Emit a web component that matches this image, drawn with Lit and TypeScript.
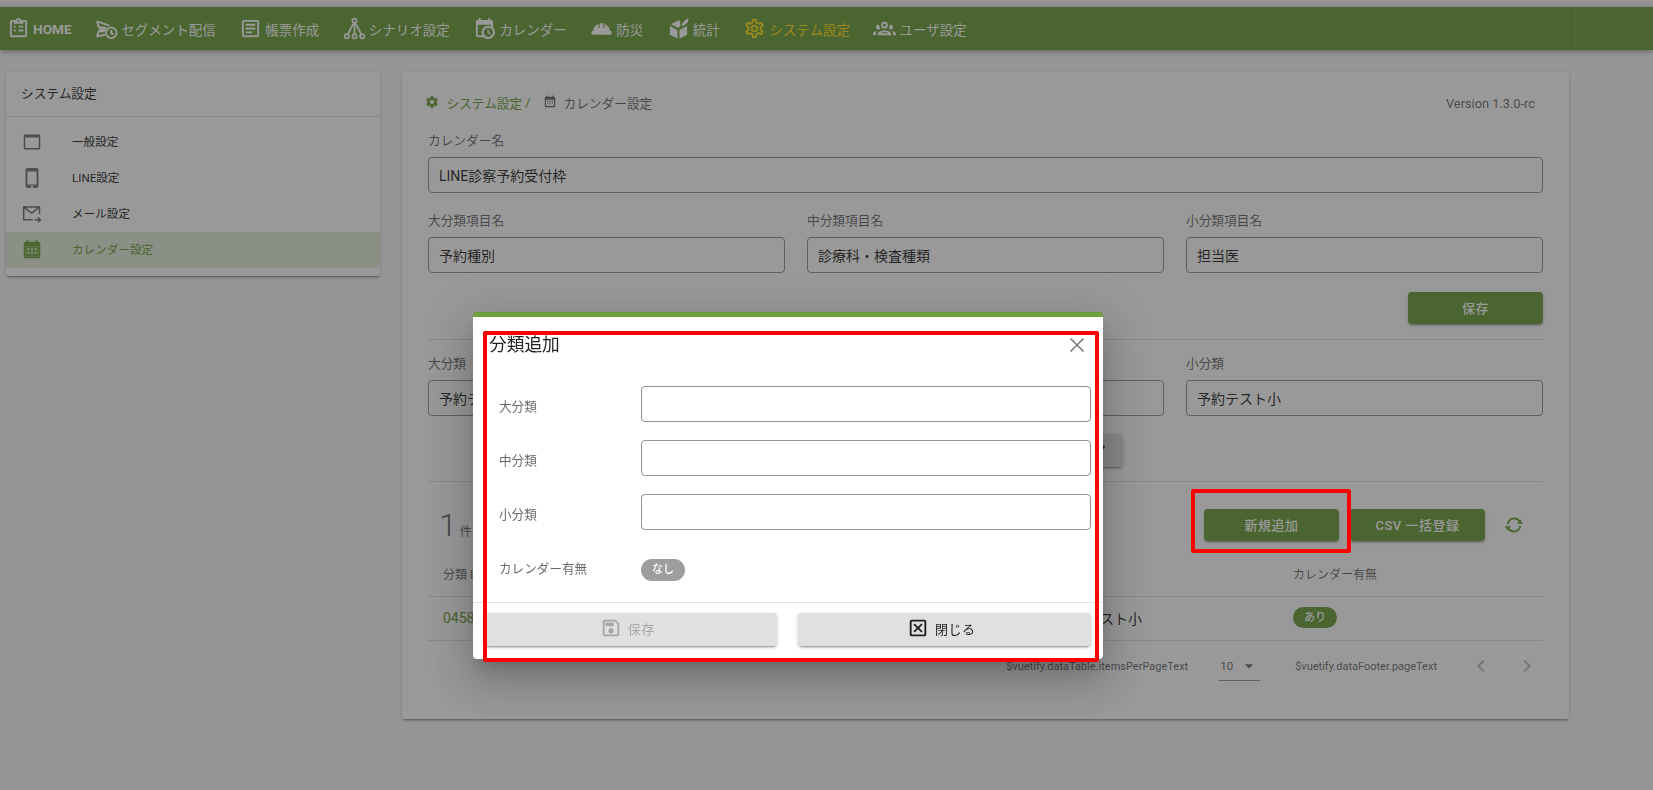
import { LitElement, html, css, svg } from "lit";
import { customElement } from "lit/decorators.js";

const path = (d: string) => svg`<path d=${d}></path>`;

const ICONS: Record<string, unknown> = {
    clipboard: path("M19,3H14.82C14.4,1.84 13.3,1 12,1C10.7,1 9.6,1.84 9.18,3H5A2,2 0 0,0 3,5V19A2,2 0 0,0 5,21H19A2,2 0 0,0 21,19V5A2,2 0 0,0 19,3M12,3A1,1 0 0,1 13,4A1,1 0 0,1 12,5A1,1 0 0,1 11,4A1,1 0 0,1 12,3M7,7H17V5H19V19H5V5H7V7M12,11H17V9H12V11M12,15H17V13H12V15M7,11H9V9H7V11M7,15H9V13H7V15Z"),
    send: svg`<g fill="none" stroke="currentColor" stroke-width="2"><path d="M2 4.5 L15 9 M2 4.5 L3.8 10.5 L12 11.5 M4 13 L11 13.5 M2 20.5 L3.8 15 L10 15 M2 20.5 L10.5 18.5"></path><circle cx="17" cy="16.5" r="5.5"></circle><path d="M17 13.5 V17 L19.5 18"></path></g>`,
    textBox: path("M5,3C3.89,3 3,3.89 3,5V19C3,20.11 3.89,21 5,21H19C20.11,21 21,20.11 21,19V5C21,3.89 20.11,3 19,3H5M5,5H19V19H5V5M7,7V9H17V7H7M7,11V13H17V11H7M7,15V17H14V15H7Z"),
    scenario: svg`<g fill="none" stroke="currentColor" stroke-width="1.8"><circle cx="12" cy="4" r="2.2"></circle><circle cx="4" cy="20" r="2.2"></circle><circle cx="12" cy="20" r="2.2"></circle><circle cx="20" cy="20" r="2.2"></circle><path d="M12 6.2 V17.8 M10.8 7 L5 18 M13.2 7 L19 18"></path></g>`,
    calendarClock: path("M15,13H16.5V15.82L18.94,17.23L18.19,18.53L15,16.69V13M19,8H5V19H9.67C9.24,18.09 9,17.07 9,16A7,7 0 0,1 16,9C17.07,9 18.09,9.24 19,9.67V8M5,21C3.89,21 3,20.1 3,19V5C3,3.89 3.89,3 5,3H6V1H8V3H16V1H18V3H19A2,2 0 0,1 21,5V11.1C22.24,12.36 23,14.09 23,16A7,7 0 0,1 16,23C14.09,23 12.36,22.24 11.1,21H5M16,11.15A4.85,4.85 0 0,0 11.15,16C11.15,18.68 13.32,20.85 16,20.85A4.85,4.85 0 0,0 20.85,16C20.85,13.32 18.68,11.15 16,11.15Z"),
    hardHat: path("M10 6.5h4v5h1.2V7.2C18.6 8.3 20.6 11 20.8 14.5h1.4C22.8 16 22.6 18 21.4 18.5H2.6C1.4 18 1.2 16 1.8 14.5h1.4C3.4 11 5.4 8.3 8.8 7.2v4.3H10z"),
    cube: svg`<path d="M3 9.5 L11 13.5 V22.5 L3 18.5Z M13 13.5 L21 9.5 V18.5 L13 22.5Z M4 7.5 L12 3.5 L14 4.5 C13.6 6 13.6 7.5 14.3 9 L12 11.5Z M15.5 9.5 C15.5 6 18 3 22.5 1.5 C22.5 5.5 20 8.5 15.5 9.5Z"></path>`,
    cogOutline: path("M12,8A4,4 0 0,1 16,12A4,4 0 0,1 12,16A4,4 0 0,1 8,12A4,4 0 0,1 12,8M12,10A2,2 0 0,0 10,12A2,2 0 0,0 12,14A2,2 0 0,0 14,12A2,2 0 0,0 12,10M10,22C9.75,22 9.54,21.82 9.5,21.58L9.13,18.93C8.5,18.68 7.96,18.34 7.44,17.94L4.95,18.95C4.73,19.03 4.46,18.95 4.34,18.73L2.34,15.27C2.21,15.05 2.27,14.78 2.46,14.63L4.57,12.97L4.5,12L4.57,11L2.46,9.37C2.27,9.22 2.21,8.95 2.34,8.73L4.34,5.27C4.46,5.05 4.73,4.96 4.95,5.05L7.44,6.05C7.96,5.66 8.5,5.32 9.13,5.07L9.5,2.42C9.54,2.18 9.75,2 10,2H14C14.25,2 14.46,2.18 14.5,2.42L14.87,5.07C15.5,5.32 16.04,5.66 16.56,6.05L19.05,5.05C19.27,4.96 19.54,5.05 19.66,5.27L21.66,8.73C21.79,8.95 21.73,9.22 21.54,9.37L19.43,11L19.5,12L19.43,13L21.54,14.63C21.73,14.78 21.79,15.05 21.66,15.27L19.66,18.73C19.54,18.95 19.27,19.04 19.05,18.95L16.56,17.95C16.04,18.34 15.5,18.68 14.87,18.93L14.5,21.58C14.46,21.82 14.25,22 14,22H10M11.25,4L10.88,6.61C9.68,6.86 8.62,7.5 7.85,8.39L5.44,7.35L4.69,8.65L6.8,10.2C6.4,11.37 6.4,12.64 6.8,13.8L4.68,15.36L5.43,16.66L7.86,15.62C8.63,16.5 9.68,17.14 10.87,17.38L11.24,20H12.76L13.13,17.39C14.32,17.14 15.37,16.5 16.14,15.62L18.57,16.66L19.32,15.36L17.2,13.81C17.6,12.64 17.6,11.37 17.2,10.2L19.31,8.65L18.56,7.35L16.15,8.39C15.38,7.5 14.32,6.86 13.12,6.62L12.75,4H11.25Z"),
    cog: path("M12,15.5A3.5,3.5 0 0,1 8.5,12A3.5,3.5 0 0,1 12,8.5A3.5,3.5 0 0,1 15.5,12A3.5,3.5 0 0,1 12,15.5M19.43,12.97C19.47,12.65 19.5,12.33 19.5,12C19.5,11.67 19.47,11.34 19.43,11L21.54,9.37C21.73,9.22 21.78,8.95 21.66,8.73L19.66,5.27C19.54,5.05 19.27,4.96 19.05,5.05L16.56,6.05C16.04,5.66 15.5,5.32 14.87,5.07L14.5,2.42C14.46,2.18 14.25,2 14,2H10C9.75,2 9.54,2.18 9.5,2.42L9.13,5.07C8.5,5.32 7.96,5.66 7.44,6.05L4.95,5.05C4.73,4.96 4.46,5.05 4.34,5.27L2.34,8.73C2.21,8.95 2.27,9.22 2.46,9.37L4.57,11C4.53,11.34 4.5,11.67 4.5,12C4.5,12.33 4.53,12.65 4.57,12.97L2.46,14.63C2.27,14.78 2.21,15.05 2.34,15.27L4.34,18.73C4.46,18.95 4.73,19.03 4.95,18.95L7.44,17.94C7.96,18.34 8.5,18.68 9.13,18.93L9.5,21.58C9.54,21.82 9.75,22 10,22H14C14.25,22 14.46,21.82 14.5,21.58L14.87,18.93C15.5,18.67 16.04,18.34 16.56,17.94L19.05,18.95C19.27,19.03 19.54,18.95 19.66,18.73L21.66,15.27C21.78,15.05 21.73,14.78 21.54,14.63L19.43,12.97Z"),
    users: path("M12,5A3.5,3.5 0 0,0 8.5,8.5A3.5,3.5 0 0,0 12,12A3.5,3.5 0 0,0 15.5,8.5A3.5,3.5 0 0,0 12,5M12,7A1.5,1.5 0 0,1 13.5,8.5A1.5,1.5 0 0,1 12,10A1.5,1.5 0 0,1 10.5,8.5A1.5,1.5 0 0,1 12,7M5.5,8A2.5,2.5 0 0,0 3,10.5C3,11.44 3.53,12.25 4.29,12.68C4.65,12.88 5.06,13 5.5,13C5.94,13 6.35,12.88 6.71,12.68C7.08,12.47 7.39,12.17 7.62,11.81C6.89,10.86 6.5,9.7 6.5,8.5C6.5,8.41 6.5,8.31 6.5,8.22C6.2,8.08 5.86,8 5.5,8M18.5,8C18.14,8 17.8,8.08 17.5,8.22C17.5,8.31 17.5,8.41 17.5,8.5C17.5,9.7 17.11,10.86 16.38,11.81C16.5,12 16.63,12.15 16.78,12.3C16.94,12.45 17.1,12.58 17.29,12.68C17.65,12.88 18.06,13 18.5,13C18.94,13 19.35,12.88 19.71,12.68C20.47,12.25 21,11.44 21,10.5A2.5,2.5 0 0,0 18.5,8M12,14C9.66,14 5,15.17 5,17.5V19H19V17.5C19,15.17 14.34,14 12,14M4.71,14.55C2.78,14.78 0,15.76 0,17.5V19H3V17.07C3,16.06 3.69,15.22 4.71,14.55M19.29,14.55C20.31,15.22 21,16.06 21,17.07V19H24V17.5C24,15.76 21.22,14.78 19.29,14.55M12,16C13.53,16 15.24,16.5 16.23,17H7.77C8.76,16.5 10.47,16 12,16Z"),
    window: path("M21 2H3C1.89 2 1 2.89 1 4V20C1 21.11 1.89 22 3 22H21C22.11 22 23 21.11 23 20V4C23 2.89 22.11 2 21 2M21 20H3V6H21V20Z"),
    phone: path("M17,19H7V5H17M12,22.5A1.3,1.3 0 0,1 10.7,21.2A1.3,1.3 0 0,1 12,19.9A1.3,1.3 0 0,1 13.3,21.2A1.3,1.3 0 0,1 12,22.5M17,1H7C5.89,1 5,1.89 5,3V21A2,2 0 0,0 7,23H17A2,2 0 0,0 19,21V3C19,1.89 18.1,1 17,1Z"),
    mailSend: svg`<g fill="none" stroke="currentColor" stroke-width="1.8"><path d="M21 12 V3.5 H2 V19 H13"></path><path d="M2.5 4 L11.5 11 L20.5 4"></path><path d="M15 19 H22 M19.2 16 L22.2 19 L19.2 22"></path></g>`,
    calendar: svg`<path fill-rule="evenodd" d="M19 3H18V1H16V3H8V1H6V3H5C3.89 3 3 3.9 3 5V19C3 20.1 3.89 21 5 21H19C20.1 21 21 20.1 21 19V5C21 3.9 20.1 3 19 3M19 19H5V8H19Z"></path><path d="M5 8H19V19H5Z" fill-opacity="0.88"></path><path fill="#e4efdc" d="M7 10H9V12H7ZM11 10H13V12H11ZM15 10H17V12H15ZM7 14H9V16H7ZM11 14H13V16H11ZM15 14H17V16H15Z"></path>`,
    calendarSmall: svg`<path fill-rule="evenodd" d="M19 3H18V1H16V3H8V1H6V3H5C3.89 3 3 3.9 3 5V19C3 20.1 3.89 21 5 21H19C20.1 21 21 20.1 21 19V5C21 3.9 20.1 3 19 3M19 19H5V8H19ZM7 10H9V12H7ZM11 10H13V12H11ZM15 10H17V12H15ZM7 14H9V16H7ZM11 14H13V16H11ZM15 14H17V16H15Z"></path>`,
    close: svg`<path fill="none" stroke="currentColor" stroke-width="1.5" d="M5.5 5.5 L18.5 18.5 M18.5 5.5 L5.5 18.5"></path>`,
    closeBox: path("M19,3H5A2,2 0 0,0 3,5V19A2,2 0 0,0 5,21H19A2,2 0 0,0 21,19V5A2,2 0 0,0 19,3M19,19H5V5H19V19M17,8.4L13.4,12L17,15.6L15.6,17L12,13.4L8.4,17L7,15.6L10.6,12L7,8.4L8.4,7L12,10.6L15.6,7L17,8.4Z"),
    save: path("M17 3H5C3.89 3 3 3.9 3 5V19C3 20.1 3.89 21 5 21H19C20.1 21 21 20.1 21 19V7L17 3M19 19H5V5H16.17L19 7.83V19M12 12C10.34 12 9 13.34 9 15S10.34 18 12 18 15 16.66 15 15 13.66 12 12 12M6 6H15V10H6V6Z"),
    sync: svg`<g fill="none" stroke="currentColor" stroke-width="2.2"><path d="M4.5 11 A7.8 7.8 0 0 1 18.6 7.5"></path><path d="M19.5 13 A7.8 7.8 0 0 1 5.4 16.5"></path></g><path d="M15.5 10.5 H23 L19.6 5.5Z M8.5 13.5 H1 L4.4 18.5Z"></path>`,
    left: path("M15.41,16.58L10.83,12L15.41,7.41L14,6L8,12L14,18L15.41,16.58Z"),
    right: path("M8.59,16.58L13.17,12L8.59,7.41L10,6L16,12L10,18L8.59,16.58Z"),
    menuDown: path("M7,10L12,15L17,10H7Z"),
};

const icon = (name: string, cls = "") =>
    html`<svg class="icon ${cls}" viewBox="0 0 24 24" fill="currentColor" aria-hidden="true">${ICONS[name]}</svg>`;

const NAV_ITEMS = [
    { label: "HOME", icon: "clipboard", cls: "strong" },
    { label: "セグメント配信", icon: "send", cls: "" },
    { label: "帳票作成", icon: "textBox", cls: "" },
    { label: "シナリオ設定", icon: "scenario", cls: "" },
    { label: "カレンダー", icon: "calendarClock", cls: "" },
    { label: "防災", icon: "hardHat", cls: "" },
    { label: "統計", icon: "cube", cls: "" },
    { label: "システム設定", icon: "cogOutline", cls: "current" },
    { label: "ユーザ設定", icon: "users", cls: "" },
];

const SIDE_ITEMS = [
    { label: "一般設定", icon: "window", cls: "s18", active: false },
    { label: "LINE設定", icon: "phone", cls: "s22", active: false },
    { label: "メール設定", icon: "mailSend", cls: "s20", active: false },
    { label: "カレンダー設定", icon: "calendar", cls: "s22", active: true },
];

@customElement("app-root")
export class AppRoot extends LitElement
{
    static styles = css`
        :host
        {
            display     : block;
            min-height  : 790px;
            background  : #fafafa;
            color       : rgba(0, 0, 0, 0.87);
            font-family : Roboto, "Noto Sans CJK JP", sans-serif;
        }

        .icon
        {
            display : block;
            flex    : none;
            width   : 24px;
            height  : 24px;
        }

        .s14 { width : 14px; height : 14px; }
        .s18 { width : 18px; height : 18px; }
        .s20 { width : 20px; height : 20px; }
        .s22 { width : 22px; height : 22px; }
        .s23 { width : 23px; height : 23px; }

        .strip
        {
            height     : 7px;
            background : linear-gradient(#fff 1px, #f4f4f4 2px, #e6e6e6);
        }

        .nav
        {
            display      : flex;
            align-items  : center;
            gap          : 23.5px;
            height       : 43px;
            padding-left : 7px;
            background   : #6d9f3b;
            color        : #fff;
            box-shadow   : 0 2px 4px -1px rgba(0, 0, 0, 0.2), 0 4px 5px rgba(0, 0, 0, 0.14);
        }

        .nav-item
        {
            display     : flex;
            align-items : center;
            gap         : 3px;
            font-size   : 13.5px;
            white-space : nowrap;
        }

        .nav-item.strong { font-size : 13.7px; font-weight : 700; }
        .nav-item.current { color : #ffe01e; }

        .nav-end
        {
            flex        : none;
            width       : 77px;
            height      : 100%;
            margin-left : auto;
            border-left : 1px solid rgba(255, 255, 255, 0.1);
        }

        .page
        {
            display     : flex;
            align-items : flex-start;
            gap         : 22px;
            padding     : 22px 0 0 6px;
        }

        .card
        {
            background    : #fff;
            border-radius : 2px;
            box-shadow    : 0 3px 1px -2px rgba(0, 0, 0, 0.2), 0 2px 2px rgba(0, 0, 0, 0.14), 0 1px 5px rgba(0, 0, 0, 0.12);
        }

        .side
        {
            flex           : none;
            width          : 374px;
            padding-bottom : 8px;
        }

        .side-title
        {
            height        : 44px;
            padding-left  : 15px;
            font-size     : 12.7px;
            line-height   : 43px;
            border-bottom : 1px solid rgba(0, 0, 0, 0.12);
            margin-bottom : 7px;
        }

        .side-item
        {
            display      : flex;
            align-items  : center;
            height       : 36px;
            padding-left : 15px;
            font-size    : 11.6px;
        }

        .side-item .slot
        {
            display         : flex;
            justify-content : center;
            width           : 22px;
            margin-right    : 29px;
            color           : rgba(0, 0, 0, 0.54);
        }

        .side-item .text { margin-bottom : 2px; }

        .side-item.active
        {
            background : #e4efdc;
            color      : #6d9f3b;
        }

        .side-item.active .slot { color : #6d9f3b; }

        .main
        {
            flex       : none;
            box-sizing : border-box;
            width      : 1167px;
            height     : 647px;
            padding    : 21px 26px 0;
        }

        .crumbs
        {
            display       : flex;
            align-items   : center;
            height        : 20px;
            margin-top    : -1px;
            margin-bottom : 19px;
            margin-left   : -3.5px;
            font-size     : 12.7px;
            color         : rgba(0, 0, 0, 0.6);
        }

        .crumbs .root
        {
            display     : flex;
            align-items : center;
            gap         : 8px;
            color       : #6d9f3b;
        }

        .crumbs .sep { margin : 0 12px 0 3px; color : #6d9f3b; }
        .crumbs .leaf { display : flex; align-items : center; gap : 7px; }

        .version
        {
            margin-left  : auto;
            margin-right : 8px;
            padding-top  : 2px;
            font-size    : 12.8px;
        }

        .field-label
        {
            height        : 20px;
            margin-bottom : 6px;
            font-size     : 12.7px;
            line-height   : 20px;
            color         : rgba(0, 0, 0, 0.6);
        }

        .box
        {
            box-sizing    : border-box;
            height        : 36px;
            padding-left  : 10px;
            border        : 1px solid rgba(0, 0, 0, 0.42);
            border-radius : 4px;
            font-size     : 14px;
            line-height   : 36px;
            white-space   : nowrap;
            overflow      : hidden;
        }

        .row
        {
            display               : grid;
            grid-template-columns : repeat(3, 357px);
            gap                   : 22px;
            margin-top            : 18px;
        }

        .rule
        {
            height     : 1px;
            background : rgba(0, 0, 0, 0.12);
        }

        .btn
        {
            display         : flex;
            align-items     : center;
            justify-content : center;
            gap             : 6px;
            box-sizing      : border-box;
            height          : 32px;
            padding-bottom  : 2px;
            border-radius   : 4px;
            background      : #e0e0e0;
            font-size       : 13px;
            font-weight     : 500;
            letter-spacing  : 0.5px;
            white-space     : nowrap;
            box-shadow      : 0 3px 1px -2px rgba(0, 0, 0, 0.2), 0 2px 2px rgba(0, 0, 0, 0.14), 0 1px 5px rgba(0, 0, 0, 0.12);
        }

        .btn.green
        {
            background : #6d9f3b;
            color      : #fff;
        }

        .w135 { width : 135px; }

        .save-row
        {
            display         : flex;
            justify-content : flex-end;
            margin          : 19px 0 15px;
        }

        .update-row
        {
            display         : flex;
            justify-content : flex-end;
            margin          : 18px 420px 14px 0;
        }

        .update-row .btn { width : 74px; height : 33px; }

        .sub-fields { margin-top : 14px; }
        .sub-fields .row { margin-top : 0; }

        .tools
        {
            display     : flex;
            align-items : center;
            gap         : 11px;
            height      : 32px;
            margin-top  : 27px;
            padding     : 0 19px 0 11px;
        }

        .count
        {
            display      : flex;
            align-items  : baseline;
            margin-right : auto;
            font-size    : 12px;
            color        : rgba(0, 0, 0, 0.6);
        }

        .count b
        {
            margin-right : 3px;
            font-size    : 32px;
            font-weight  : 300;
        }

        .sync
        {
            margin-left : 8px;
            color       : #6d9f3b;
        }

        .grid-row
        {
            display               : grid;
            grid-template-columns : 177px 220px 218px 235px 1fr;
            align-items           : center;
            box-sizing            : border-box;
            padding-left          : 15px;
            border-bottom         : 1px solid rgba(0, 0, 0, 0.12);
        }

        .grid-head
        {
            height     : 46px;
            margin-top : 10px;
            font-size  : 12px;
            color      : rgba(0, 0, 0, 0.6);
        }

        .grid-body
        {
            height         : 44px;
            padding-bottom : 2px;
            font-size      : 14px;
        }

        .link { color : #6d9f3b; }

        .chip
        {
            display       : block;
            width         : fit-content;
            padding       : 0 11px;
            height        : 21px;
            border-radius : 11px;
            background    : #6d9f3b;
            color         : #fff;
            font-size     : 11px;
            font-weight   : 500;
            line-height   : 21px;
        }

        .chip.off
        {
            height      : 22px;
            line-height : 22px;
            background  : #9e9e9e;
        }

        .pager
        {
            display         : flex;
            align-items     : center;
            justify-content : flex-end;
            height          : 52px;
            margin-top      : -1px;
            padding-right   : 4px;
            font-size       : 11px;
            color           : rgba(0, 0, 0, 0.6);
        }

        .per-page
        {
            display         : flex;
            align-items     : center;
            justify-content : space-between;
            box-sizing      : border-box;
            width           : 41px;
            height          : 30px;
            margin          : 0 35px 0 31px;
            padding         : 0 1px;
            font-size       : 11.5px;
            border-bottom   : 1px solid rgba(0, 0, 0, 0.42);
        }

        .pager .chev { color : rgba(0, 0, 0, 0.26); }
        .pager .chev.first { margin : 0 22px 0 32px; }
        .pager .menu { color : rgba(0, 0, 0, 0.54); }

        .scrim
        {
            position   : fixed;
            inset      : 0;
            z-index    : 5;
            background : rgba(33, 33, 33, 0.46);
        }

        .dialog
        {
            position      : absolute;
            left          : 473px;
            top           : 312px;
            box-sizing    : border-box;
            width         : 630px;
            height        : 347px;
            border-top    : 5px solid #6d9f3b;
            border-radius : 4px;
            background    : #fff;
            box-shadow    : 0 11px 15px -7px rgba(0, 0, 0, 0.2), 0 24px 38px 3px rgba(0, 0, 0, 0.14), 0 9px 46px 8px rgba(0, 0, 0, 0.12);
        }

        .dialog-head
        {
            display         : flex;
            align-items     : center;
            justify-content : space-between;
            height          : 24px;
            padding         : 16px 14px 0 16px;
        }

        .dialog-title
        {
            margin-bottom : 4px;
            font-size     : 17.7px;
        }

        .dialog-head .icon { color : rgba(0, 0, 0, 0.54); }

        .form
        {
            display               : grid;
            grid-template-columns : 142px 449.5px;
            row-gap               : 18px;
            margin-top            : 29px;
            padding-left          : 26px;
            font-size             : 12.6px;
            color                 : rgba(0, 0, 0, 0.6);
        }

        .form-label { padding-top : 10px; }
        .form-label.flush { padding-top : 0; margin-top : 10px; }
        .form .flush-cell { margin-top : 11px; }

        .dialog-foot
        {
            display               : grid;
            grid-template-columns : 292.5px 292.5px;
            gap                   : 21.5px;
            margin-top            : 10px;
            padding-left          : 11px;
        }

        .dialog-foot .btn
        {
            height         : 33px;
            padding        : 0 6px 3px 0;
            font-size      : 13px;
            font-weight    : 400;
        }

        .dialog-foot .btn.disabled { color : rgba(0, 0, 0, 0.26); }

        .dialog-rule { margin-top : 21px; }

        .mark
        {
            position      : absolute;
            box-sizing    : border-box;
            border        : 4px solid #f00;
            border-radius : 2px;
        }

        .mark.dialog-mark { left : 483px; top : 331px; width : 616px; height : 331px; }
        .mark.add-mark { left : 1191px; top : 489px; width : 160px; height : 64px; }
    `;

    private field (label: string, value: string)
    {
        return html`
            <div>
                <div class="field-label">${ label }</div>
                <div class="box">${ value }</div>
            </div>
        `;
    }

    render ()
    {
        return html`
            <div class="strip"></div>
            <nav class="nav">
                ${ NAV_ITEMS.map(item => html`
                    <div class="nav-item ${ item.cls }">${ icon(item.icon, "s23") }<span>${ item.label }</span></div>
                `) }
                <div class="nav-end"></div>
            </nav>

            <div class="page">
                <aside class="card side">
                    <div class="side-title">システム設定</div>
                    ${ SIDE_ITEMS.map(item => html`
                        <div class="side-item ${ item.active ? "active" : "" }">
                            <span class="slot">${ icon(item.icon, item.cls) }</span>
                            <span class="text">${ item.label }</span>
                        </div>
                    `) }
                </aside>

                <main class="card main">
                    <div class="crumbs">
                        <span class="root">${ icon("cog", "s14") }システム設定</span>
                        <span class="sep">/</span>
                        <span class="leaf">${ icon("calendarSmall", "s14") }カレンダー設定</span>
                        <span class="version">Version 1.3.0-rc</span>
                    </div>

                    ${ this.field("カレンダー名", "LINE診察予約受付枠") }

                    <div class="row">
                        ${ this.field("大分類項目名", "予約種別") }
                        ${ this.field("中分類項目名", "診療科・検査種類") }
                        ${ this.field("小分類項目名", "担当医") }
                    </div>

                    <div class="save-row"><div class="btn green w135">保存</div></div>
                    <div class="rule"></div>

                    <div class="sub-fields">
                        <div class="row">
                            ${ this.field("大分類", "予約テスト大") }
                            ${ this.field("", "") }
                            ${ this.field("小分類", "予約テスト小") }
                        </div>
                    </div>

                    <div class="update-row"><div class="btn">クリア</div></div>
                    <div class="rule"></div>

                    <div class="tools">
                        <div class="count"><b>1</b>件</div>
                        <div class="btn green w135">新規追加</div>
                        <div class="btn green w135">CSV 一括登録</div>
                        <span class="sync">${ icon("sync", "s20") }</span>
                    </div>

                    <div class="grid-row grid-head">
                        <span>分類 ID</span><span></span><span></span><span></span><span>カレンダー有無</span>
                    </div>
                    <div class="grid-row grid-body">
                        <span class="link">04581</span><span></span><span></span><span>予約テスト小</span>
                        <span class="chip">あり</span>
                    </div>

                    <div class="pager">
                        <span>$vuetify.dataTable.itemsPerPageText</span>
                        <div class="per-page"><span>10</span>${ icon("menuDown", "s20 menu") }</div>
                        <span>$vuetify.dataFooter.pageText</span>
                        <span class="chev first">${ icon("left") }</span>
                        <span class="chev">${ icon("right") }</span>
                    </div>
                </main>
            </div>

            <div class="scrim">
                <section class="dialog">
                    <div class="dialog-head">
                        <span class="dialog-title">分類追加</span>
                        ${ icon("close") }
                    </div>
                    <div class="form">
                        <div class="form-label">大分類</div><div class="box"></div>
                        <div class="form-label">中分類</div><div class="box"></div>
                        <div class="form-label">小分類</div><div class="box"></div>
                        <div class="form-label flush">カレンダー有無</div>
                        <div class="flush-cell"><span class="chip off">なし</span></div>
                    </div>
                    <div class="rule dialog-rule"></div>
                    <div class="dialog-foot">
                        <div class="btn disabled">${ icon("save", "s22") }保存</div>
                        <div class="btn">${ icon("closeBox", "s22") }閉じる</div>
                    </div>
                </section>
                <div class="mark dialog-mark"></div>
                <div class="mark add-mark"></div>
            </div>
        `;
    }
}
